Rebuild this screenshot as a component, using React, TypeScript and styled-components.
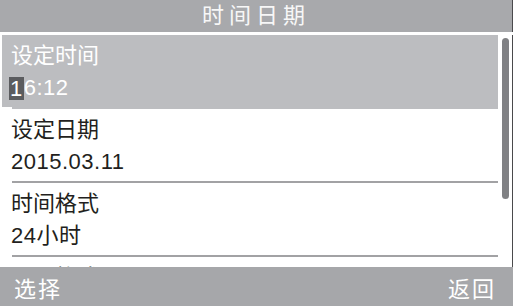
import React from "react";
import styled, { createGlobalStyle } from "styled-components";

const Global = createGlobalStyle`
  html, body { margin: 0; padding: 0; background: #ffffff; }
  body { font-family: "Liberation Sans", "Noto Sans CJK SC", sans-serif; }
`;

const Screen = styled.div`
  width: 513px;
  height: 306px;
  display: flex;
  flex-direction: column;
  background: #ffffff;
  overflow: hidden;
  font-family: "Liberation Sans", "Noto Sans CJK SC", sans-serif;
`;

const Header = styled.div`
  height: 32px;
  flex: none;
  background: #a8a9ac;
  border-right: 1px solid #4a4a4c;
  color: #f7f7f7;
  font-size: 22px;
  letter-spacing: 5px;
  display: flex;
  align-items: center;
  justify-content: center;
  line-height: 32px;
`;

const Body = styled.div`
  flex: 1;
  margin-top: 3px;
  display: flex;
  overflow: hidden;
  border-right: 1px solid #4a4a4c;
`;

const List = styled.div`
  flex: 1;
  padding-left: 2px;
  display: flex;
  flex-direction: column;
  min-width: 0;
`;

const Row = styled.div<{ $selected?: boolean }>`
  flex: none;
  height: 72px;
  padding: 5px 0 0 9px;
  box-sizing: border-box;
  background: ${(p) => (p.$selected ? "#bcbdc0" : "transparent")};
  color: ${(p) => (p.$selected ? "#ffffff" : "#231f20")};
  font-size: 22px;
  display: flex;
  flex-direction: column;
`;

const Title = styled.div`
  height: 32px;
  line-height: 32px;
  white-space: nowrap;
`;

const Value = styled.div`
  height: 32px;
  line-height: 32px;
  letter-spacing: 0.5px;
  white-space: nowrap;
`;

const Cursor = styled.span`
  display: inline-block;
  background: #5b5c5f;
  color: #ffffff;
  height: 23px;
  line-height: 23px;
  margin-left: -2px;
  padding: 0 1px 0 1px;
  vertical-align: -1px;
`;

const Divider = styled.div<{ $hidden?: boolean }>`
  flex: none;
  height: 2px;
  margin-left: 10px;
  background: ${(p) => (p.$hidden ? "#bcbdc0" : "#a2a2a4")};
`;

const Track = styled.div`
  width: 14px;
  flex: none;
  display: flex;
  justify-content: flex-start;
  padding: 3px 0 0 4px;
  box-sizing: border-box;
`;

const Thumb = styled.div`
  width: 7px;
  height: 161px;
  border-radius: 4px;
  background: #808184;
`;

const Footer = styled.div`
  height: 39px;
  flex: none;
  background: #a6a7aa;
  color: #ffffff;
  font-size: 22px;
  letter-spacing: 2px;
  display: flex;
  align-items: center;
  justify-content: space-between;
  padding: 0 17px 0 14px;
  box-sizing: border-box;
`;

const items: { title: string; value?: string; selected?: boolean }[] = [
  { title: "设定时间", value: "16:12", selected: true },
  { title: "设定日期", value: "2015.03.11" },
  { title: "时间格式", value: "24小时" },
  { title: "日期格式" },
];

export default function App() {
  return (
    <>
      <Global />
      <Screen>
        <Header>时间日期</Header>
        <Body>
          <List>
            {items.map((it, i) => (
              <React.Fragment key={it.title}>
                <Row $selected={it.selected}>
                  <Title>{it.title}</Title>
                  {it.value && (
                    <Value>
                      {it.selected ? (
                        <>
                          <Cursor>{it.value[0]}</Cursor>
                          {it.value.slice(1)}
                        </>
                      ) : (
                        it.value
                      )}
                    </Value>
                  )}
                </Row>
                {i < items.length - 1 && <Divider $hidden={i === 0} />}
              </React.Fragment>
            ))}
          </List>
          <Track>
            <Thumb />
          </Track>
        </Body>
        <Footer>
          <span>选择</span>
          <span>返回</span>
        </Footer>
      </Screen>
    </>
  );
}
